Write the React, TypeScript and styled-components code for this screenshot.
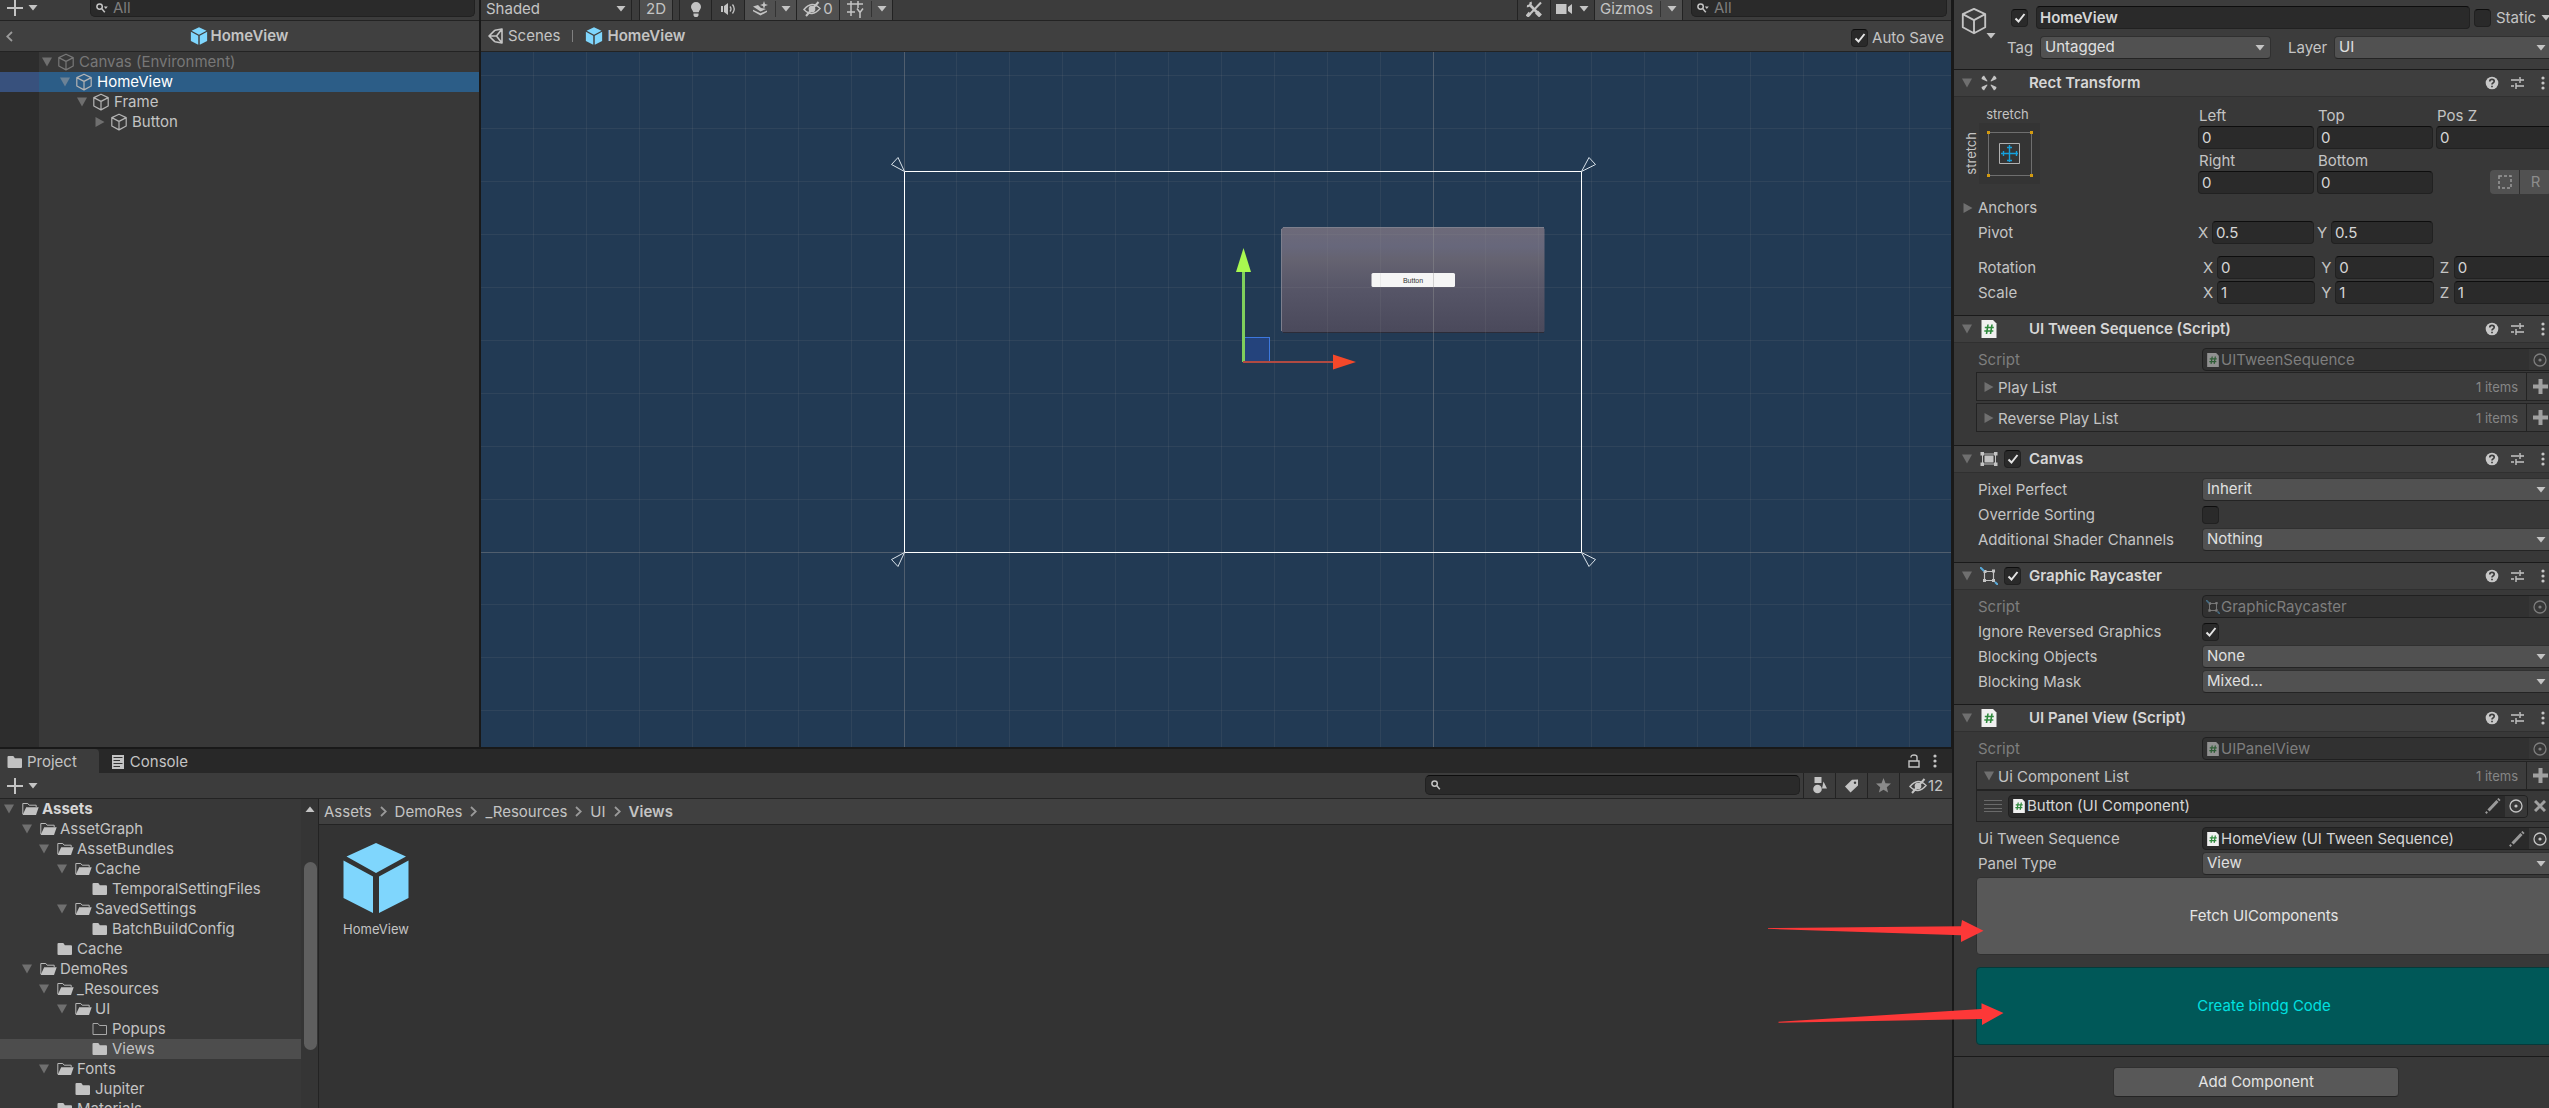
import React, { useId } from "react";
import styled, { createGlobalStyle, css } from "styled-components";

/* ---------- theme values ---------- */

const c = {
  window: "#191919",
  panel: "#383838",
  toolbar: "#3c3c3c",
  header: "#3e3e3e",
  crumb: "#404040",
  dark: "#282828",
  line: "#232323",
  text: "#c4c4c4",
  bright: "#d6d6d6",
  dim: "#7e7e7e",
  field: "#2a2a2a",
  button: "#585858",
  drop: "#515151",
  active: "#505050",
  select: "#2c5d87",
  prefab: "#7fd6fd",
};

const GlobalStyle = createGlobalStyle`
  *, *::before, *::after { box-sizing: border-box; }
  html, body { margin: 0; background: ${c.window}; }
  body { overflow: hidden; }
  body, button, input, select {
    font-family: Inter, "Liberation Sans", sans-serif;
    font-size: 15px;
    line-height: 20px;
    color: ${c.text};
  }
  button, input, select { margin: 0; padding: 0; border: 0; background: none; outline: 0; }
  svg { display: block; flex: none; }
`;

/* ---------- icons ---------- */

type IconProps = { size?: number; color?: string };

const CubeOutline = ({ size = 18, color = c.text }: IconProps) => (
  <svg width={size} height={size} viewBox="0 0 18 18" fill="none" stroke={color} strokeWidth="1.2" strokeLinejoin="round">
    <path d="M9 1.2 16.2 4.6V13L9 16.9 1.8 13V4.6ZM1.8 4.6 9 8.4l7.2-3.8M9 8.4v8.5" />
  </svg>
);

const CubeSolid = ({ size = 18 }: IconProps) => (
  <svg width={size} height={size} viewBox="0 0 72 72" fill={c.prefab}>
    <path d="M36 1 66 14.5 36 31 6.500 14.500ZM3.500 18.500 33 34.500V71L3.500 56ZM68.500 18.500 39 34.500V71L68.500 56Z" />
  </svg>
);

const Caret = ({ color = c.text }: IconProps) => (
  <svg width="10" height="6" viewBox="0 0 10 6" fill={color}>
    <path d="M0.500 0h9L5 5.500Z" />
  </svg>
);

const FoldArrow = ({ open = true, color = "#6f6f6f" }: { open?: boolean; color?: string }) => (
  <svg width="10" height="10" viewBox="0 0 10 10" fill={color}>
    <path d={open ? "M0 .5h10L5 9.500Z" : "M.5 0v10L9.500 5Z"} />
  </svg>
);

const Plus = () => (
  <svg width="16" height="16" viewBox="0 0 16 16" stroke={c.text} strokeWidth="2">
    <path d="M8 0v16M0 8h16" />
  </svg>
);

const Search = ({ caret = false }: { caret?: boolean }) => (
  <svg width="12" height="10" viewBox="0 0 12 10" fill="none" stroke={c.text} strokeWidth="1.500">
    <circle cx="3.600" cy="3.600" r="2.700" />
    <path d="m5.600 5.600 3.200 3.600" />
    {caret && <path d="M7.800 3.500h4L9.800 6Z" fill={c.text} stroke="none" />}
  </svg>
);

const ClosedFolder = () => (
  <svg width="17" height="14" viewBox="0 0 17 14" fill="#c2c2c2">
    <path d="M.5 2a1 1 0 0 1 1-1h4.800l1.600 2.200H14a1 1 0 0 1 1 1V12a1 1 0 0 1-1 1H1.500a1 1 0 0 1-1-1Z" />
  </svg>
);

const EmptyFolder = () => (
  <svg width="17" height="14" viewBox="0 0 17 14" fill="none" stroke="#a8a8a8">
    <path d="M1 1.500h5l1.500 2H14.500v9H1Z" />
  </svg>
);

const OpenFolder = () => (
  <svg width="17" height="14" viewBox="0 0 17 14">
    <path d="M.8 12V1.500h5l1.400 1.700h7V5" fill="none" stroke="#b8b8b8" />
    <path d="M4.200 5.200h12.500L14 13H.6Z" fill="#c2c2c2" />
  </svg>
);

const Bulb = () => (
  <svg width="12" height="18" viewBox="0 0 12 18" fill={c.text}>
    <path d="M6 2a5 5 0 0 1 5 5c0 2-1.700 3-2.300 5.200H3.300C2.700 10 1 9 1 7a5 5 0 0 1 5-5ZM3.500 13.500h5v2L7.300 17H4.700l-1.200-1.500Z" />
  </svg>
);

const Sound = () => (
  <svg width="15" height="12" viewBox="0 0 15 12" fill={c.text}>
    <path d="M0 3h2v6H0ZM3 3l4-3v12L3 9Z" />
    <path d="M9 3.500q2 2.500 0 5M11.500 1.500q3.500 4.500 0 9" fill="none" stroke={c.text} strokeWidth="1.300" />
  </svg>
);

const Effects = () => (
  <svg width="15" height="16" viewBox="0 0 15 16" fill={c.text}>
    <path d="M0 5.500 5 4l3 3 5 1-5.500 2.500ZM0 8.700l7.500 3.600L14 9.500V11l-6.500 3.500L0 10.300ZM11 0l1 3 3 1-3 1-1 3-1-3-3-1 3-1Z" />
  </svg>
);

const HiddenEye = () => (
  <svg width="18" height="16" viewBox="0 0 18 16" fill="none" stroke={c.text} strokeWidth="1.500">
    <path d="M1 8.500Q9-1 17 7.500 9 17 1 8.500Z" />
    <circle cx="9" cy="8" r="2.600" fill={c.text} />
    <path d="M3 15 15.500 1" strokeWidth="2" />
  </svg>
);

const GridY = () => (
  <svg width="17" height="18" viewBox="0 0 17 18" fill="none" stroke={c.text} strokeWidth="1.500">
    <path d="M4 1v15M11 1v7M0 4h16M0 12h8M10 8.500l3 4 3-4M13 12v6" />
  </svg>
);

const Tools = () => (
  <svg width="16" height="16" viewBox="0 0 16 16" fill="none" stroke={c.text} strokeWidth="2.600">
    <path d="M2.500 14.500 15 1.500" strokeWidth="2" />
    <path d="m1 15.500 3-3.500" strokeWidth="3.500" />
    <path d="m4.500 4.500 9.500 10" />
    <path d="M4.500 1a3 3 0 0 1-3.500 4" strokeWidth="2.400" />
    <path d="m10.500 11 4 4" strokeWidth="4" />
  </svg>
);

const Camera = () => (
  <svg width="16" height="12" viewBox="0 0 16 12" fill={c.text}>
    <path d="M0 1h10.500v10H0ZM12 4l4-3v10l-4-3Z" />
  </svg>
);

const SceneLogo = () => (
  <svg width="16" height="16" viewBox="0 0 16 16" fill="none" stroke={c.text} strokeWidth="1.600" strokeLinejoin="round">
    <path d="m7 2.200 7-1.200v14l-7-1.200M7 2.200 1 8l6 5.800M1 8h7.500M8.500 8 14 1M8.500 8l5.500 7" />
  </svg>
);

const Help = () => (
  <svg width="14" height="14" viewBox="0 0 14 14">
    <circle cx="7" cy="7" r="6.300" fill="#c8c8c8" />
    <path d="M4.800 5.400q0-2 2.200-2t2.200 1.900q0 1-1.200 1.700-1 .6-1 1.500M7 9.700v1.500" fill="none" stroke="#3e3e3e" strokeWidth="1.700" />
  </svg>
);

const Preset = () => (
  <svg width="14" height="14" viewBox="0 0 14 14" fill="none" stroke={c.text} strokeWidth="1.400">
    <path d="M0 4h8M9 1v6M9 4h4M0 10h3M5 7v6M5 10h8" />
  </svg>
);

const Dots = () => (
  <svg width="4" height="14" viewBox="0 0 4 14" fill={c.text}>
    <circle cx="2" cy="2" r="1.600" />
    <circle cx="2" cy="7" r="1.600" />
    <circle cx="2" cy="12" r="1.600" />
  </svg>
);

const RectTransformIcon = () => (
  <svg width="18" height="18" viewBox="0 0 18 18" fill={c.text}>
    <path d="M2 3l2-1.500L7.500 7 7 7.500 1.500 5ZM16 3l-2-1.500L10.500 7l.5.500L16.500 5ZM2 15l2 1.500L7.500 11l-.5-.5L1.500 13ZM16 15l-2 1.500-3.500-5.500.5-.5 5.500 2.500Z" />
  </svg>
);

const ScriptIcon = ({ size = 18 }: IconProps) => (
  <svg width={size} height={size} viewBox="0 0 18 18">
    <path d="M1.500 0H13l3.500 3.500V18h-15Z" fill="#f0f0f0" />
    <path d="M8 4.500 6.500 14M12 4.500 10.500 14M4.800 7.500h9M4.300 11h9" stroke="#2f8a3d" strokeWidth="1.600" fill="none" />
  </svg>
);

const CanvasIcon = () => (
  <svg width="18" height="14" viewBox="0 0 18 14">
    <path d="M2.500 2h13v10h-13Z" fill="none" stroke={c.text} />
    <path d="M4.500 3.500h9v7h-9ZM.5 0h3.500v3.500H.5ZM14 0h3.500v3.500H14ZM.5 10.500h3.500V14H.5ZM14 10.500h3.500V14H14Z" fill={c.text} />
  </svg>
);

const RaycasterIcon = ({ size = 18 }: IconProps) => (
  <svg width={size} height={size} viewBox="0 0 18 18">
    <path d="M4.500 4.500h9v9h-9Z" fill="none" stroke={c.text} strokeWidth="1.200" />
    <path d="M3.500 3h3v3h-3ZM12 2.500h3v3h-3ZM3 12h3v3H3ZM12 12h3v3h-3Z" fill={c.text} />
    <path d="M0 0l4 4M15 15l3 3" stroke="#59a9d8" strokeWidth="2" />
  </svg>
);

const Target = () => (
  <svg width="14" height="14" viewBox="0 0 14 14" fill="none" stroke={c.text} strokeWidth="1.300">
    <circle cx="7" cy="7" r="6" />
    <circle cx="7" cy="7" r="1.600" fill={c.text} stroke="none" />
  </svg>
);

const Pencil = () => (
  <svg width="16" height="16" viewBox="0 0 16 16" stroke="#9a9a9a" fill="none">
    <path d="m3.500 12.500 9-9.500" strokeWidth="3" />
    <path d="m13.300 2.200 1.200-1.200" strokeWidth="3" />
    <path d="m.8 15.200 1.400-1.400" strokeWidth="2" />
  </svg>
);

const BoldPlus = () => (
  <svg width="15" height="15" viewBox="0 0 15 15" stroke="#a0a0a0" strokeWidth="4">
    <path d="M7.500 0v15M0 7.500h15" />
  </svg>
);

const BoldCross = () => (
  <svg width="12" height="12" viewBox="0 0 12 12" stroke="#a0a0a0" strokeWidth="3">
    <path d="m1 1 10 10M11 1 1 11" />
  </svg>
);

const DragHandle = () => (
  <svg width="18" height="14" viewBox="0 0 18 14" stroke="#6a6a6a">
    <path d="M0 1.500h18M0 5.500h18M0 9.500h18M0 12.500h18" />
  </svg>
);

const ConsoleIcon = () => (
  <svg width="15" height="14" viewBox="0 0 15 14">
    <path d="M0 0h12v14H0Z" fill={c.text} />
    <path d="M1.500 2.500h9M1.500 5.500H8M1.500 8.500h9M1.500 11.500H8" stroke="#333" strokeWidth="1.200" />
  </svg>
);

const Lock = () => (
  <svg width="12" height="14" viewBox="0 0 12 14" fill="none" stroke={c.text} strokeWidth="1.400">
    <path d="M1 7h10v6H1ZM3 3.500V3q0-2 3-2t3 2v4" />
  </svg>
);

const Shapes = () => (
  <svg width="14" height="17" viewBox="0 0 14 17" fill={c.text}>
    <path d="M1.500 0h7v6h-7ZM10.500 4.500 14 11.500H9Z" />
    <circle cx="4.500" cy="12" r="4.300" />
  </svg>
);

const Tag = () => (
  <svg width="14" height="14" viewBox="0 0 14 14">
    <path d="M0 7.500 7 .8 13 .5V6.500L5.500 13.500Z" fill={c.text} />
    <circle cx="10" cy="3.800" r="1.200" fill="#3c3c3c" />
  </svg>
);

const Star = () => (
  <svg width="15" height="15" viewBox="0 0 15 15" fill="#8a8a8a">
    <path d="m7.500 0 2 5.200 5.500.4-4.200 3.600 1.300 5.300-4.600-2.800-4.600 2.800 1.300-5.300L0 5.600l5.500-.4Z" />
  </svg>
);

const Chevron = ({ back = false }: { back?: boolean }) => (
  <svg width="7" height="11" viewBox="0 0 7 11" fill="none" stroke="#9a9a9a" strokeWidth="1.800">
    <path d={back ? "M6 1 1.200 5.500l4.800 4.500" : "m1 1 4.800 4.500-4.800 4.500"} />
  </svg>
);

const CheckMark = () => (
  <svg width="12" height="12" viewBox="0 0 12 12" fill="none" stroke="#e4e4e4" strokeWidth="2">
    <path d="m1.500 6.500 3 3L10.500 2" />
  </svg>
);

const AnchorPreview = () => (
  <svg width="61" height="61" viewBox="0 0 61 61" fill="none">
    <path d="M0 0h61v61H0Z" fill="#343434" />
    <path d="M9.500 9.500h43v43h-43Z" stroke="#6e6e6e" />
    <path d="M20.500 20.500h20v20h-20Z" stroke="#b0b0b0" />
    <path d="M30.500 22v17M22 30.500h17M28 24.500h5M28 37.500h5M24.500 28v5M37.500 28v5" stroke="#15a0dc" strokeWidth="1.400" />
    <path d="M8 8h3v3H8ZM51 8h3v3h-3ZM8 51h3v3H8ZM51 51h3v3h-3Z" fill="#d29a10" />
  </svg>
);

/* ---------- shared controls ---------- */

const Ghost = styled.button`
  display: inline-flex;
  align-items: center;
  justify-content: center;
  flex: none;
`;

const fieldLook = css`
  background: ${c.field};
  border: 1px solid #212121;
  border-top-color: #0d0d0d;
  border-radius: 4px;
`;

const TextInput = styled.input<{ $bold?: boolean }>`
  ${fieldLook}
  width: 100%;
  min-width: 0;
  height: 23px;
  padding: 0 3px;
  color: ${c.bright};
  font-weight: ${(p) => (p.$bold ? 600 : 400)};
`;

const CheckFrame = styled.span`
  position: relative;
  display: inline-flex;
  flex: none;
  width: 17px;
  height: 18px;

  svg {
    position: absolute;
    left: 3px;
    top: 3px;
    pointer-events: none;
  }
`;

const CheckInput = styled.input`
  ${fieldLook}
  appearance: none;
  width: 100%;
  height: 100%;
`;

const Checkbox = ({ on, ...rest }: { on?: boolean; id?: string; "aria-label"?: string }) => (
  <CheckFrame>
    <CheckInput type="checkbox" defaultChecked={on} {...rest} />
    {on && <CheckMark />}
  </CheckFrame>
);

const SelectFrame = styled.span`
  position: relative;
  display: flex;
  flex: 1;
  min-width: 0;

  svg {
    position: absolute;
    right: 6px;
    top: 9px;
    pointer-events: none;
  }
`;

const SelectInput = styled.select`
  appearance: none;
  width: 100%;
  height: 23px;
  padding: 0 20px 2px 4px;
  line-height: 20px;
  background: ${c.drop};
  border: 1px solid #303030;
  border-bottom-color: #242424;
  border-radius: 4px;
  color: #e0e0e0;
`;

const Select = ({ value, id }: { value: string; id?: string }) => (
  <SelectFrame>
    <SelectInput id={id} defaultValue={value}>
      <option>{value}</option>
    </SelectInput>
    <Caret />
  </SelectFrame>
);

/* A docked box hangs from the window's top edge, so it has no upper border. */
const SearchBox = styled.label<{ $docked?: boolean }>`
  ${fieldLook}
  display: flex;
  align-items: center;
  gap: 5px;
  height: ${(p) => (p.$docked ? 17 : 20)}px;
  padding: 0 6px 0 5px;
  border-radius: ${(p) => (p.$docked ? "0 0 5px 5px" : "5px")};
  ${(p) => p.$docked && "border-top: 0;"}

  input {
    flex: 1;
    min-width: 0;
    height: 16px;
    line-height: 16px;
  }
  input::placeholder {
    color: ${c.dim};
    opacity: 1;
  }
`;

/* ---------- window frame ---------- */

const Window = styled.div`
  position: relative;
  display: grid;
  grid-template-columns: minmax(0, 1fr) 595px;
  gap: 2px;
  height: 100vh;
  overflow: hidden;
`;

const Workspace = styled.div`
  display: grid;
  grid-template-rows: 747px minmax(0, 1fr);
  gap: 2px;
  min-width: 0;
  min-height: 0;
`;

const UpperDock = styled.div`
  display: grid;
  grid-template-columns: 479px minmax(0, 1fr);
  gap: 2px;
  min-height: 0;
  padding-right: 1px;
`;

const Pane = styled.section`
  display: flex;
  flex-direction: column;
  min-width: 0;
  min-height: 0;
  overflow: hidden;
  background: ${c.panel};
`;

const TopToolbar = styled.div`
  display: flex;
  align-items: flex-start;
  flex: none;
  height: 21px;
  background: ${c.toolbar};
  border-bottom: 1px solid ${c.line};
`;

const ToolCell = styled.div<{ $w?: number; $on?: boolean; $gap?: number; $left?: boolean }>`
  display: flex;
  align-items: center;
  justify-content: space-between;
  flex: none;
  height: 20px;
  width: ${(p) => (p.$w ? p.$w + "px" : "auto")};
  margin-left: ${(p) => p.$gap ?? 0}px;
  padding: 0 5px 2px;
  line-height: 18px;
  background: ${(p) => (p.$on ? c.active : "transparent")};
  border-right: 1px solid ${c.line};
  border-left: ${(p) => (p.$left ? `1px solid ${c.line}` : "0")};
`;

const CellIcon = styled(Ghost)`
  flex: 1;
  gap: 2px;
  height: 18px;
  line-height: 18px;
`;

const InnerRule = styled.span`
  width: 1px;
  height: 16px;
  margin: 0 5px;
  background: #333;
`;

const Spacer = styled.span`
  flex: 1;
`;

const CrumbBar = styled.div`
  display: flex;
  align-items: center;
  flex: none;
  height: 31px;
  padding: 0 6px;
  background: ${c.crumb};
  border-bottom: 1px solid ${c.line};
`;

/* ---------- hierarchy ---------- */

const HierarchyTools = styled(TopToolbar)`
  padding-left: 7px;
`;

const AddMenu = styled(Ghost)`
  gap: 5px;
  height: 16px;
`;

const HierarchySearch = styled(SearchBox)`
  flex: 1;
  margin: 0 4px 0 52px;
`;

const StageTitle = styled.strong`
  display: flex;
  align-items: center;
  justify-content: center;
  flex: 1;
  gap: 3px;
  padding-right: 8px;
  font-weight: 600;
`;

const HierarchyBody = styled.div`
  flex: 1;
  background: linear-gradient(to right, #2d2d2d 39px, ${c.panel} 39px);
`;

const HierarchyRow = styled.div<{ $depth: number; $selected?: boolean; $dim?: boolean }>`
  display: flex;
  align-items: center;
  height: 20px;
  padding-left: ${(p) => 42 + Math.round(p.$depth * 17.5)}px;
  color: ${(p) => (p.$selected ? "#fff" : p.$dim ? "#777" : c.text)};
  background: ${(p) =>
    p.$selected ? `linear-gradient(to right, #38517d 39px, ${c.select} 39px)` : "none"};

  svg + svg {
    margin: 0 4px 0 5px;
  }
`;

type Node = { name: string; depth: number; open?: boolean; selected?: boolean; dim?: boolean };

const hierarchy: Node[] = [
  { name: "Canvas (Environment)", depth: 0, open: true, dim: true },
  { name: "HomeView", depth: 1, open: true, selected: true },
  { name: "Frame", depth: 2, open: true },
  { name: "Button", depth: 3, open: false },
];

const Hierarchy = () => (
  <Pane>
    <HierarchyTools>
      <AddMenu aria-label="Create">
        <Plus />
        <Caret />
      </AddMenu>
      <HierarchySearch $docked>
        <Search caret />
        <input placeholder="All" aria-label="Search hierarchy" />
      </HierarchySearch>
    </HierarchyTools>
    <CrumbBar>
      <Ghost aria-label="Back">
        <Chevron back />
      </Ghost>
      <StageTitle>
        <CubeSolid />
        HomeView
      </StageTitle>
    </CrumbBar>
    <HierarchyBody>
      {hierarchy.map((n) => (
        <HierarchyRow key={n.name} $depth={n.depth} $selected={n.selected} $dim={n.dim}>
          <FoldArrow open={n.open} color={n.selected ? "#6c8296" : undefined} />
          <CubeOutline color={n.dim ? "#777" : "#b4b4b4"} />
          {n.name}
        </HierarchyRow>
      ))}
    </HierarchyBody>
  </Pane>
);

/* ---------- scene ---------- */

const SceneCrumbs = styled(CrumbBar)`
  padding: 0 7px;
`;

const CrumbLink = styled.a<{ $bold?: boolean }>`
  display: flex;
  align-items: center;
  gap: 4px;
  color: ${c.text};
  text-decoration: none;
  font-weight: ${(p) => (p.$bold ? 600 : 400)};
`;

const CrumbRule = styled.span`
  width: 1px;
  height: 12px;
  margin: 0 12px;
  background: #808080;
`;

const AutoSave = styled.label`
  display: flex;
  align-items: center;
  gap: 4px;
  padding-top: 3px;
`;

const SceneSearch = styled(SearchBox)`
  width: 256px;
  margin: 0 4px 0 8px;
`;

const SceneCanvas = styled.svg`
  flex: 1;
  width: 100%;
  min-height: 0;
  background: #223a54;
`;

const STEP = 52.9;
const ORIGIN_X = 423.5;
const ORIGIN_Y = 500.5;
const MINOR = "rgba(150, 150, 150, .12)";
const MAJOR = "rgba(150, 150, 150, .4)";

const GridLines = () => {
  const lines: React.ReactNode[] = [];
  for (let i = -8; i < 40; i++) {
    const x = Math.round(ORIGIN_X + i * STEP) - 0.5;
    lines.push(<path key={"v" + i} d={`M${x} 0V3000`} stroke={i % 10 === 0 ? MAJOR : MINOR} />);
  }
  for (let j = -9; j < 12; j++) {
    const y = Math.round(ORIGIN_Y + j * STEP) - 0.5;
    lines.push(<path key={"h" + j} d={`M0 ${y}H5000`} stroke={j % 10 === 0 ? MAJOR : MINOR} />);
  }
  return <g>{lines}</g>;
};

const SceneView = () => (
  <SceneCanvas>
    <defs>
      <linearGradient id="card" x1="0" y1="0" x2="0" y2="1">
        <stop offset="0" stopColor="#6d6a79" />
        <stop offset="0.180" stopColor="#67677b" />
        <stop offset="0.300" stopColor="#656371" />
        <stop offset="0.600" stopColor="#565567" />
        <stop offset="1" stopColor="#4a495b" />
      </linearGradient>
    </defs>
    <rect x="800.500" y="175.500" width="263" height="105" rx="2" fill="url(#card)" />
    <path d="M802 175.500h261M800.500 177v102" stroke="#7d7f8d" />
    <path d="M802 280.500h261" stroke="#2c2c38" />
    <rect x="890.500" y="221" width="83.500" height="14" rx="1.500" fill="#f5f5f5" />
    <text x="932" y="231" textAnchor="middle" fontFamily="Liberation Sans, sans-serif" fontSize="7" fill="#333">
      Button
    </text>
    <GridLines />
    <g fill="none" stroke="#fff">
      <path d="M423.500 119.500h677v381h-677Z" />
      <path d="M423.500 119.500 410.500 112.500l6.500-7ZM1100.500 119.500l14-7-6.500-7ZM423.500 500.500l-13 7 6.500 7ZM1100.500 500.500l14 7-6.500 7Z" stroke="#d9e2ea" />
    </g>
    <rect x="763.500" y="285.500" width="25" height="25" fill="#24437c" stroke="#3d78de" />
    <path d="M762.500 219v91" stroke="#7fcf5c" strokeWidth="3" />
    <path d="M762.500 196 770 220H755Z" fill="#a8f850" />
    <path d="M762 310h91" stroke="#b04a42" strokeWidth="2" />
    <path d="M875 310 852 302.500v15Z" fill="#f4482a" />
  </SceneCanvas>
);

const Scene = () => (
  <Pane>
    <TopToolbar>
      <ToolCell $w={151}>
        Shaded
        <Caret />
      </ToolCell>
      <ToolCell $w={34} $gap={7} $on $left>
        <CellIcon>2D</CellIcon>
      </ToolCell>
      <ToolCell $w={33} $gap={6} $left>
        <CellIcon aria-label="Lighting"><Bulb /></CellIcon>
      </ToolCell>
      <ToolCell $w={33}>
        <CellIcon aria-label="Audio"><Sound /></CellIcon>
      </ToolCell>
      <ToolCell $w={52} $on>
        <CellIcon aria-label="Effects"><Effects /></CellIcon>
        <InnerRule />
        <Caret />
      </ToolCell>
      <ToolCell $w={43} $on>
        <CellIcon aria-label="Hidden objects"><HiddenEye />0</CellIcon>
      </ToolCell>
      <ToolCell $w={53} $on>
        <CellIcon aria-label="Grid"><GridY /></CellIcon>
        <InnerRule />
        <Caret />
      </ToolCell>
      <Spacer />
      <ToolCell $w={34} $left>
        <CellIcon aria-label="Tools"><Tools /></CellIcon>
      </ToolCell>
      <ToolCell $w={44}>
        <Camera />
        <Caret />
      </ToolCell>
      <ToolCell $w={88} $on>
        Gizmos
        <InnerRule />
        <Caret />
      </ToolCell>
      <SceneSearch $docked>
        <Search caret />
        <input placeholder="All" aria-label="Search scene" />
      </SceneSearch>
    </TopToolbar>
    <SceneCrumbs>
      <CrumbLink href="#scenes">
        <SceneLogo />
        Scenes
      </CrumbLink>
      <CrumbRule />
      <CrumbLink href="#homeview" $bold>
        <CubeSolid />
        HomeView
      </CrumbLink>
      <Spacer />
      <AutoSave>
        <Checkbox on />
        Auto Save
      </AutoSave>
    </SceneCrumbs>
    <SceneView />
  </Pane>
);

/* ---------- project ---------- */

const TabBar = styled.div`
  display: flex;
  flex: none;
  height: 24px;
  padding-right: 15px;
  background: ${c.dark};
`;

const Tab = styled.button<{ $on?: boolean }>`
  display: flex;
  align-items: center;
  gap: 3px;
  height: 24px;
  padding: 2px 22px 0 7px;
  margin-right: 6px;
  border-radius: 0 4px 0 0;
  background: ${(p) => (p.$on ? c.toolbar : "transparent")};
`;

const TabTools = styled.div`
  display: flex;
  align-items: center;
  gap: 13px;
  margin-left: auto;
`;

const ProjectTools = styled.div`
  display: flex;
  align-items: center;
  flex: none;
  height: 26px;
  padding-left: 7px;
  background: ${c.toolbar};
  border-bottom: 1px solid ${c.line};
`;

const ProjectSearch = styled(SearchBox)`
  width: 375px;
  margin: 0 3px 2px auto;
`;

const ToolButton = styled.button<{ $wide?: boolean }>`
  display: flex;
  align-items: center;
  justify-content: center;
  gap: 1px;
  width: ${(p) => (p.$wide ? 53 : 32)}px;
  height: 25px;
  border-left: 1px solid ${c.line};
`;

const ProjectBody = styled.div`
  display: grid;
  grid-template-columns: 301px 18px minmax(0, 1fr);
  flex: 1;
  min-height: 0;
`;

const TreeList = styled.div`
  min-height: 0;
  overflow: hidden;
`;

const TreeRow = styled.div<{ $depth: number; $selected?: boolean; $bold?: boolean }>`
  display: flex;
  align-items: center;
  gap: 3px;
  height: 20px;
  padding-left: ${(p) => 4 + Math.round(p.$depth * 17.5)}px;
  font-weight: ${(p) => (p.$bold ? 700 : 400)};
  color: ${(p) => (p.$bold ? c.bright : c.text)};
  background: ${(p) => (p.$selected ? "#4d4d4d" : "none")};
`;

const ArrowSlot = styled.span`
  width: 15px;
`;

const ScrollTrack = styled.div`
  display: flex;
  flex-direction: column;
  align-items: center;
  padding: 7px 0 0 1px;
  background: #353535;
  border-right: 1px solid ${c.line};

  svg {
    transform: rotate(180deg);
  }
`;

const ScrollThumb = styled.div`
  width: 13px;
  height: 188px;
  margin-top: 50px;
  border-radius: 7px;
  background: #5f5f5f;
`;

const Browser = styled.div`
  background: #333;
  min-width: 0;
`;

const PathBar = styled.nav`
  display: flex;
  align-items: center;
  gap: 8px;
  height: 26px;
  padding-left: 5px;
  background: ${c.crumb};
  border-bottom: 1px solid ${c.line};
`;

const Asset = styled.figure`
  display: inline-flex;
  flex-direction: column;
  align-items: center;
  gap: 5px;
  margin: 17px 0 0 21px;
  font-size: 13px;
`;

type Folder = { name: string; depth: number; kind: "open" | "closed" | "empty"; selected?: boolean };

const folders: Folder[] = [
  { name: "Assets", depth: 0, kind: "open" },
  { name: "AssetGraph", depth: 1, kind: "open" },
  { name: "AssetBundles", depth: 2, kind: "open" },
  { name: "Cache", depth: 3, kind: "open" },
  { name: "TemporalSettingFiles", depth: 4, kind: "closed" },
  { name: "SavedSettings", depth: 3, kind: "open" },
  { name: "BatchBuildConfig", depth: 4, kind: "closed" },
  { name: "Cache", depth: 2, kind: "closed" },
  { name: "DemoRes", depth: 1, kind: "open" },
  { name: "_Resources", depth: 2, kind: "open" },
  { name: "UI", depth: 3, kind: "open" },
  { name: "Popups", depth: 4, kind: "empty" },
  { name: "Views", depth: 4, kind: "closed", selected: true },
  { name: "Fonts", depth: 2, kind: "open" },
  { name: "Jupiter", depth: 3, kind: "closed" },
  { name: "Materials", depth: 2, kind: "closed" },
];

const folderIcon = { open: <OpenFolder />, closed: <ClosedFolder />, empty: <EmptyFolder /> };
const path = ["Assets", "DemoRes", "_Resources", "UI", "Views"];

const Project = () => (
  <Pane>
    <TabBar>
      <Tab $on>
        <ClosedFolder />
        Project
      </Tab>
      <Tab>
        <ConsoleIcon />
        Console
      </Tab>
      <TabTools>
        <Ghost aria-label="Lock"><Lock /></Ghost>
        <Ghost aria-label="Menu"><Dots /></Ghost>
      </TabTools>
    </TabBar>
    <ProjectTools>
      <AddMenu aria-label="Create asset">
        <Plus />
        <Caret />
      </AddMenu>
      <ProjectSearch>
        <Search />
        <input aria-label="Search project" />
      </ProjectSearch>
      <ToolButton aria-label="Search by type"><Shapes /></ToolButton>
      <ToolButton aria-label="Search by label"><Tag /></ToolButton>
      <ToolButton aria-label="Favorites"><Star /></ToolButton>
      <ToolButton $wide aria-label="Hidden packages"><HiddenEye />12</ToolButton>
    </ProjectTools>
    <ProjectBody>
      <TreeList>
        {folders.map((f, i) => (
          <TreeRow key={i} $depth={f.depth} $selected={f.selected} $bold={f.depth === 0}>
            <ArrowSlot>{f.kind === "open" && <FoldArrow />}</ArrowSlot>
            {folderIcon[f.kind]}
            {f.name}
          </TreeRow>
        ))}
      </TreeList>
      <ScrollTrack>
        <Caret />
        <ScrollThumb />
      </ScrollTrack>
      <Browser>
        <PathBar>
          {path.map((p, i) => (
            <React.Fragment key={p}>
              {i > 0 && <Chevron />}
              <CrumbLink href={"#" + p} $bold={i === path.length - 1}>{p}</CrumbLink>
            </React.Fragment>
          ))}
        </PathBar>
        <Asset>
          <CubeSolid size={72} />
          <figcaption>HomeView</figcaption>
        </Asset>
      </Browser>
    </ProjectBody>
  </Pane>
);

/* ---------- inspector ---------- */

/* Content runs a few pixels under the window's right edge. */
const InspectorContent = styled.div`
  margin-right: -3px;
`;

const ObjectHeader = styled.header`
  display: flex;
  gap: 12px;
  height: 69px;
  padding: 6px 0 0 7px;
  background: ${c.toolbar};
`;

const ObjectIcon = styled(Ghost)`
  align-items: flex-end;
  align-self: flex-start;
  width: 34px;
  height: 33px;

  svg:first-child {
    margin: 0 -2px 4px 0;
  }
`;

const ObjectRows = styled.div`
  display: flex;
  flex-direction: column;
  flex: 1;
  gap: 7px;
  min-width: 0;
`;

const ObjectRow = styled.div`
  display: flex;
  align-items: center;
`;

const NameRow = styled(ObjectRow)`
  padding-left: 4px;

  > input {
    flex: 1;
    margin: 0 4px 0 8px;
  }
`;

const StaticLabel = styled.label`
  display: flex;
  align-items: center;
  gap: 5px;
  flex: none;
  width: 78px;
`;

const HalfLabel = styled.label<{ $w: number }>`
  flex: none;
  width: ${(p) => p.$w}px;
`;

const TagCell = styled.div`
  display: flex;
  align-items: center;
  flex: none;
  width: 281px;
  padding-right: 17px;
`;

const LayerCell = styled.div`
  display: flex;
  align-items: center;
  flex: 1;
  min-width: 0;
`;

const ComponentHeader = styled.div`
  display: flex;
  align-items: center;
  height: 28px;
  padding: 0 7px 0 8px;
  background: ${c.header};
  border-top: 1px solid #1a1a1a;
  border-bottom: 1px solid #303030;
`;

const HeaderIcon = styled.span`
  display: flex;
  justify-content: center;
  width: 18px;
  margin: 0 6px 0 8px;
`;

const HeaderCheck = styled.span`
  display: flex;
  width: 25px;
`;

const HeaderTitle = styled.h2`
  flex: 1;
  margin: 0;
  font-size: 15px;
  font-weight: 600;
  color: ${c.bright};
`;

const HeaderTools = styled.div`
  display: flex;
  align-items: center;
  gap: 12px;

  button:last-child {
    margin-left: 4px;
  }
`;

const ComponentBody = styled.div<{ $roomy?: boolean }>`
  display: flex;
  flex-direction: column;
  gap: 2px;
  padding: 5px 0 ${(p) => (p.$roomy ? 12 : 11)}px 22px;
`;

const Row = styled.div<{ $dim?: boolean }>`
  display: grid;
  grid-template-columns: 224px minmax(0, 1fr);
  align-items: center;
  height: 23px;
  padding-left: 2px;
  color: ${(p) => (p.$dim ? c.dim : c.text)};
`;

const Component = ({
  title,
  icon,
  check,
  children,
}: {
  title: string;
  icon: React.ReactNode;
  check?: boolean;
  children: React.ReactNode;
}) => (
  <section>
    <ComponentHeader>
      <FoldArrow />
      <HeaderIcon>{icon}</HeaderIcon>
      <HeaderCheck>{check && <Checkbox on aria-label={title + " enabled"} />}</HeaderCheck>
      <HeaderTitle>{title}</HeaderTitle>
      <HeaderTools>
        <Ghost aria-label="Help"><Help /></Ghost>
        <Ghost aria-label="Presets"><Preset /></Ghost>
        <Ghost aria-label="More"><Dots /></Ghost>
      </HeaderTools>
    </ComponentHeader>
    {children}
  </section>
);

const ObjectField = styled.div<{ $dim?: boolean }>`
  display: flex;
  align-items: center;
  flex: 1;
  min-width: 0;
  height: 23px;
  padding-left: 3px;
  border: 1px solid #202020;
  border-radius: 4px;
  background: ${(p) => (p.$dim ? "#313131" : c.field)};

  > svg,
  > button svg {
    opacity: ${(p) => (p.$dim ? 0.5 : 1)};
  }

  input {
    flex: 1;
    min-width: 0;
    padding-left: 1px;
    color: ${(p) => (p.$dim ? c.dim : c.bright)};
  }
`;

const Picker = styled(Ghost)<{ $dim?: boolean }>`
  width: 22px;
  height: 21px;
  margin-left: 4px;
  background: ${(p) => (p.$dim ? "#363636" : "#373737")};
  border-radius: 0 3px 3px 0;
`;

const ObjectRef = ({
  id,
  value,
  icon,
  dim,
  edit,
  label,
}: {
  id?: string;
  value: string;
  icon: React.ReactNode;
  dim?: boolean;
  edit?: boolean;
  label?: string;
}) => (
  <ObjectField $dim={dim}>
    {icon}
    <input id={id} aria-label={label} readOnly value={value} />
    {edit && <Ghost aria-label="Edit"><Pencil /></Ghost>}
    <Picker $dim={dim} aria-label="Pick object"><Target /></Picker>
  </ObjectField>
);

const ScriptRow = ({ value, icon }: { value: string; icon?: React.ReactNode }) => {
  const id = useId();
  return (
    <Row $dim>
      <label htmlFor={id}>Script</label>
      <ObjectRef id={id} dim value={value} icon={icon ?? <ScriptIcon size={14} />} />
    </Row>
  );
};

const SelectRow = ({ label, value }: { label: string; value: string }) => {
  const id = useId();
  return (
    <Row>
      <label htmlFor={id}>{label}</label>
      <Select id={id} value={value} />
    </Row>
  );
};

const CheckRow = ({ label, on }: { label: string; on?: boolean }) => {
  const id = useId();
  return (
    <Row>
      <label htmlFor={id}>{label}</label>
      <Checkbox id={id} on={on} />
    </Row>
  );
};

/* rect transform */

const RectBody = styled.div`
  padding: 9px 0 9px 8px;
`;

const RectTop = styled.div`
  display: grid;
  grid-template-columns: 236px minmax(0, 1fr);
`;

const AnchorBox = styled.div`
  display: grid;
  grid-template-columns: 17px 61px;
  grid-template-rows: 17px 61px;
  align-items: center;
  align-content: start;
  font-size: 13px;
`;

const AnchorTop = styled.span`
  grid-column: 2;
  line-height: 17px;
  padding-right: 4px;
  text-align: center;
`;

const AnchorSide = styled.span`
  writing-mode: vertical-rl;
  transform: rotate(180deg);
  justify-self: center;
  line-height: 16px;
`;

const RectGrid = styled.div`
  display: grid;
  grid-template-columns: repeat(3, minmax(0, 1fr));
  gap: 2px 3px;
`;

const StackedField = styled.label`
  display: flex;
  flex-direction: column;
`;

const StackedName = styled.span`
  padding-left: 1px;
`;

const RectModes = styled.div`
  display: flex;
  align-items: flex-end;
  justify-content: flex-end;
`;

const ModeButton = styled.button<{ $first?: boolean }>`
  display: flex;
  align-items: center;
  justify-content: center;
  width: ${(p) => (p.$first ? 30 : 32)}px;
  height: 24px;
  background: ${c.drop};
  border-right: 1px solid #303030;
  border-radius: ${(p) => (p.$first ? "4px 0 0 4px" : "0 4px 4px 0")};
  color: #8c8c8c;
`;

const AnchorsRow = styled.div`
  display: flex;
  align-items: center;
  gap: 5px;
  height: 23px;
  margin: 2px 0;
  padding-left: 1px;
`;

const VectorRow = styled.div<{ $shift?: boolean }>`
  display: grid;
  grid-template-columns: ${(p) => (p.$shift ? 225 : 220)}px minmax(0, 1fr);
  align-items: center;
  height: 23px;
  margin-bottom: 2px;
  padding-left: 16px;
`;

const VectorFields = styled.div<{ $shift?: boolean }>`
  display: grid;
  grid-template-columns: repeat(3, minmax(0, 1fr));
  gap: ${(p) => (p.$shift ? 6 : 3)}px;
`;

const AxisField = styled.label`
  display: grid;
  grid-template-columns: 14px minmax(0, 1fr);
  align-items: center;
`;

const RowGap = styled.div`
  height: 10px;
`;

const Vector = ({ label, values, shift }: { label: string; values: string[]; shift?: boolean }) => (
  <VectorRow $shift={shift}>
    <span>{label}</span>
    <VectorFields $shift={shift}>
      {values.map((v, i) => (
        <AxisField key={i}>
          {"XYZ"[i]}
          <TextInput defaultValue={v} />
        </AxisField>
      ))}
    </VectorFields>
  </VectorRow>
);

const RectTransform = () => (
  <Component title="Rect Transform" icon={<RectTransformIcon />}>
    <RectBody>
      <RectTop>
        <AnchorBox>
          <AnchorTop>stretch</AnchorTop>
          <AnchorSide>stretch</AnchorSide>
          <AnchorPreview />
        </AnchorBox>
        <RectGrid>
          {["Left", "Top", "Pos Z", "Right", "Bottom"].map((l) => (
            <StackedField key={l}>
              <StackedName>{l}</StackedName>
              <TextInput defaultValue="0" />
            </StackedField>
          ))}
          <RectModes>
            <ModeButton $first aria-label="Blueprint mode">
              <svg width="14" height="14" viewBox="0 0 14 14" fill="none" stroke="#9a9a9a" strokeWidth="1.500" strokeDasharray="3 2">
                <path d="M1 1h12v12H1Z" />
              </svg>
            </ModeButton>
            <ModeButton>R</ModeButton>
          </RectModes>
        </RectGrid>
      </RectTop>
      <AnchorsRow>
        <FoldArrow open={false} />
        Anchors
      </AnchorsRow>
      <Vector label="Pivot" values={["0.5", "0.5"]} />
      <RowGap />
      <Vector label="Rotation" values={["0", "0", "0"]} shift />
      <Vector label="Scale" values={["1", "1", "1"]} shift />
    </RectBody>
  </Component>
);

/* reorderable lists */

const ListFrame = styled.div<{ $open?: boolean }>`
  margin-top: -1px;
  margin-bottom: ${(p) => (p.$open ? 3 : 1)}px;
  border: 1px solid ${c.line};
`;

const ListHeader = styled.div`
  display: flex;
  align-items: center;
  height: 27px;
  padding-left: 7px;
  background: #3c3c3c;
`;

const ListTitle = styled.span`
  flex: 1;
  padding: 3px 0 0 4px;
`;

const ListCount = styled.span`
  padding-right: 8px;
  font-size: 13px;
  color: #868686;
`;

const ListAdd = styled(Ghost)`
  width: 25px;
  height: 27px;
  padding-left: 3px;
  border-left: 1px solid ${c.line};
`;

const ListItem = styled.div`
  display: flex;
  align-items: center;
  gap: 6px;
  height: 32px;
  padding: 0 5px 0 7px;
  border-top: 2px solid ${c.line};
`;

const List = ({ title, children }: { title: string; children?: React.ReactNode }) => (
  <ListFrame $open={!!children}>
    <ListHeader>
      <FoldArrow open={!!children} />
      <ListTitle>{title}</ListTitle>
      <ListCount>1 items</ListCount>
      <ListAdd aria-label={"Add to " + title}><BoldPlus /></ListAdd>
    </ListHeader>
    {children}
  </ListFrame>
);

const ActionButton = styled.button<{ $teal?: boolean }>`
  height: 78px;
  margin-bottom: ${(p) => (p.$teal ? 0 : 10)}px;
  background: ${(p) => (p.$teal ? "#005858" : c.button)};
  border: 1px solid ${(p) => (p.$teal ? "#053a3a" : "#303030")};
  border-radius: 4px;
  color: ${(p) => (p.$teal ? "#00e0e0" : "#e4e4e4")};
`;

const AddComponentBar = styled.div`
  display: flex;
  justify-content: center;
  padding: 10px 0 12px 6px;
  border-top: 1px solid #1a1a1a;
`;

const AddComponent = styled.button`
  width: 286px;
  height: 30px;
  background: ${c.button};
  border: 1px solid #303030;
  border-bottom-color: #242424;
  border-radius: 4px;
  color: #e4e4e4;
`;

const Inspector = () => {
  const tag = useId();
  const layer = useId();
  const tween = useId();
  return (
    <Pane>
      <InspectorContent>
        <ObjectHeader>
          <ObjectIcon aria-label="Object icon">
            <CubeOutline size={28} />
            <Caret />
          </ObjectIcon>
          <ObjectRows>
            <NameRow>
              <Checkbox on aria-label="Active" />
              <TextInput $bold defaultValue="HomeView" aria-label="Name" />
              <StaticLabel>
                <Checkbox />
                Static
                <Caret />
              </StaticLabel>
            </NameRow>
            <ObjectRow>
              <TagCell>
                <HalfLabel $w={33} htmlFor={tag}>Tag</HalfLabel>
                <Select id={tag} value="Untagged" />
              </TagCell>
              <LayerCell>
                <HalfLabel $w={46} htmlFor={layer}>Layer</HalfLabel>
                <Select id={layer} value="UI" />
              </LayerCell>
            </ObjectRow>
          </ObjectRows>
        </ObjectHeader>

        <RectTransform />

        <Component title="UI Tween Sequence (Script)" icon={<ScriptIcon />}>
          <ComponentBody $roomy>
            <ScriptRow value="UITweenSequence" />
            <List title="Play List" />
            <List title="Reverse Play List" />
          </ComponentBody>
        </Component>

        <Component title="Canvas" icon={<CanvasIcon />} check>
          <ComponentBody>
            <SelectRow label="Pixel Perfect" value="Inherit" />
            <CheckRow label="Override Sorting" />
            <SelectRow label="Additional Shader Channels" value="Nothing" />
          </ComponentBody>
        </Component>

        <Component title="Graphic Raycaster" icon={<RaycasterIcon />} check>
          <ComponentBody>
            <ScriptRow value="GraphicRaycaster" icon={<RaycasterIcon size={14} />} />
            <CheckRow label="Ignore Reversed Graphics" on />
            <SelectRow label="Blocking Objects" value="None" />
            <SelectRow label="Blocking Mask" value="Mixed..." />
          </ComponentBody>
        </Component>

        <Component title="UI Panel View (Script)" icon={<ScriptIcon />}>
          <ComponentBody>
            <ScriptRow value="UIPanelView" />
            <List title="Ui Component List">
              <ListItem>
                <DragHandle />
                <ObjectRef label="Element 0" value="Button (UI Component)" icon={<ScriptIcon size={14} />} edit />
                <Ghost aria-label="Remove"><BoldCross /></Ghost>
              </ListItem>
            </List>
            <Row>
              <label htmlFor={tween}>Ui Tween Sequence</label>
              <ObjectRef id={tween} value="HomeView (UI Tween Sequence)" icon={<ScriptIcon size={14} />} edit />
            </Row>
            <SelectRow label="Panel Type" value="View" />
            <ActionButton>Fetch UIComponents</ActionButton>
            <ActionButton $teal>Create bindg Code</ActionButton>
          </ComponentBody>
        </Component>

        <AddComponentBar>
          <AddComponent>Add Component</AddComponent>
        </AddComponentBar>
      </InspectorContent>
    </Pane>
  );
};

/* ---------- annotation arrows ---------- */

const Callouts = styled.svg`
  position: absolute;
  top: 915px;
  right: 539px;
  pointer-events: none;
`;

export default function App() {
  return (
    <>
      <GlobalStyle />
      <Window>
        <Workspace>
          <UpperDock>
            <Hierarchy />
            <Scene />
          </UpperDock>
          <Project />
        </Workspace>
        <Inspector />
        <Callouts width="250" height="120" viewBox="0 0 250 120" fill="#fd3838">
          <path d="M8 13 201 11.300 202 5 223.500 15.700 201 27V20.300L8 13.800Z" />
          <path d="M18.500 106.800 221.500 94V88.300L243.500 98 222 110V104L18.500 107.800Z" />
        </Callouts>
      </Window>
    </>
  );
}
